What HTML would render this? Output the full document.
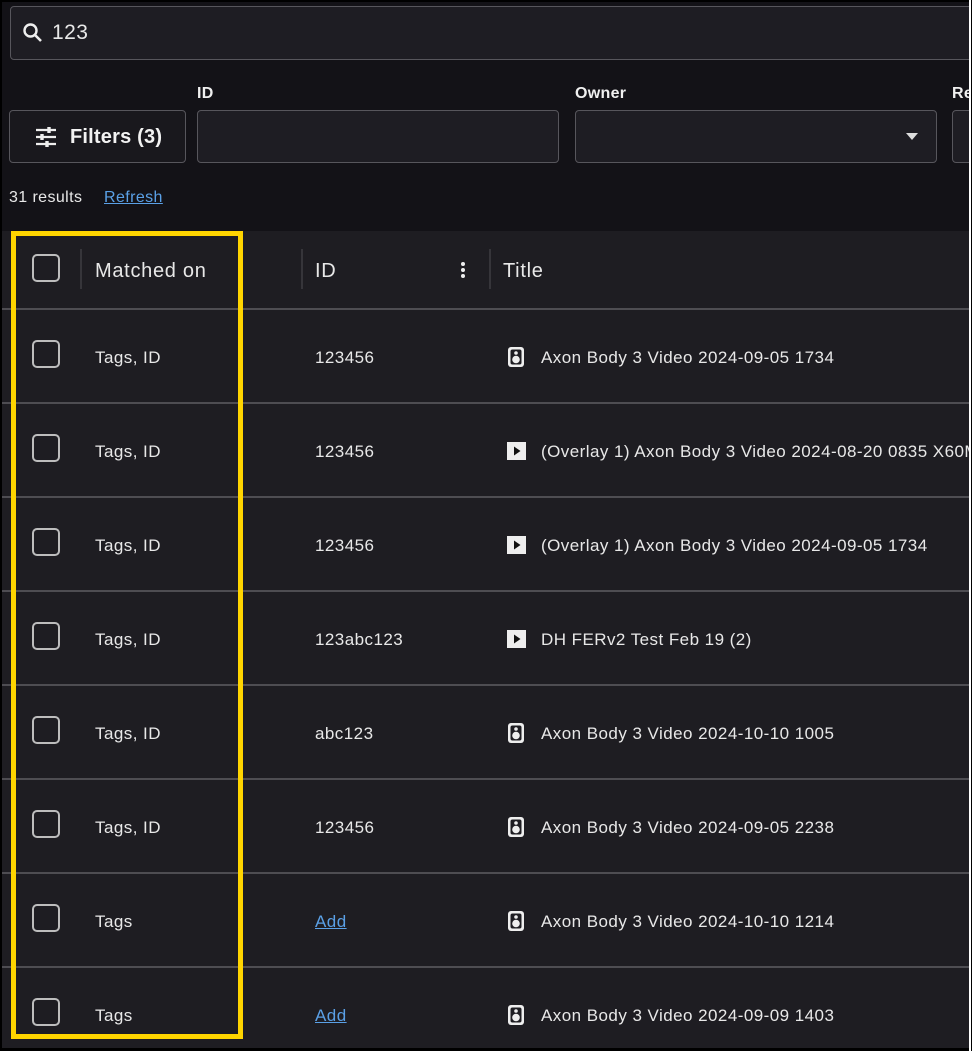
<!DOCTYPE html>
<html><head><meta charset="utf-8"><style>
*{box-sizing:border-box;margin:0;padding:0}
body{width:972px;height:1051px;background:#000;overflow:hidden;font-family:"Liberation Sans",sans-serif;color:#ececec;position:relative}
#pg{position:absolute;left:2px;top:2px;width:967px;height:1046px;background:#131217;overflow:hidden}
.a{position:absolute}
.box{position:absolute;border:1px solid #57565c;border-radius:4px;background:#1e1d23}
.lbl{position:absolute;font-size:16px;font-weight:bold;color:#f0f0f0;letter-spacing:0.3px}
#tbl{position:absolute;left:0;top:229px;width:967px;height:820px;background:#1e1d22}
.row{position:absolute;left:0;width:967px;height:94px;border-top:2px solid #4e4d52}
.cb{position:absolute;left:30px;width:28px;height:28px;border:2px solid #bdbdbd;border-radius:5px}
.row .cb{top:30px}
.t{position:absolute;font-size:17px;color:#e8e8e8;white-space:nowrap;letter-spacing:0.45px}
.row .t{top:38px}
.h{font-size:20px;letter-spacing:0.7px}
.lk{color:#5aa0e6;text-decoration:underline}
.ico{position:absolute;left:504px;top:36px}
</style></head><body>
<div id="pg">
<div class="box" style="left:8px;top:4px;width:980px;height:54px"></div>
<svg class="a" style="left:20px;top:20px" width="22" height="22" viewBox="0 0 22 22"><circle cx="8.5" cy="8.5" r="6" fill="none" stroke="#eee" stroke-width="2.4"/><path d="M13 13l6 6" stroke="#eee" stroke-width="2.6"/></svg>
<div class="t" style="left:50px;top:19px;font-size:21px">123</div>
<div class="lbl" style="left:195px;top:83px">ID</div>
<div class="lbl" style="left:573px;top:83px">Owner</div>
<div class="lbl" style="left:950px;top:83px">Re</div>
<div class="box" style="left:7px;top:108px;width:177px;height:53px;background:#19181d"></div>
<svg class="a" style="left:33px;top:125px" width="22" height="20" viewBox="0 0 22 20"><g stroke="#eee" stroke-width="2.2"><path d="M1 3h20M1 10h20M1 17h20"/></g><g stroke="#eee" stroke-width="3.4"><path d="M14 0v6M7 7v6M12 14v6"/></g></svg>
<div class="t" style="left:68px;top:124px;font-size:20px;font-weight:bold;color:#f2f2f2;letter-spacing:0.2px">Filters (3)</div>
<div class="box" style="left:195px;top:108px;width:362px;height:53px"></div>
<div class="box" style="left:573px;top:108px;width:362px;height:53px"></div>
<svg class="a" style="left:904px;top:131px" width="12" height="7"><path d="M0 0h12L6 7z" fill="#ddd"/></svg>
<div class="box" style="left:950px;top:108px;width:60px;height:53px"></div>
<div class="t" style="left:7px;top:187px;font-size:16px;letter-spacing:0.4px">31 results</div>
<div class="t lk" style="left:102px;top:187px;font-size:16px;letter-spacing:0.4px">Refresh</div>
<div id="tbl">
 <div class="cb" style="top:23px"></div>
 <div class="a" style="left:78px;top:18px;width:2px;height:40px;background:#36353a"></div>
 <div class="t h" style="left:93px;top:29px">Matched on</div>
 <div class="a" style="left:299px;top:18px;width:2px;height:40px;background:#36353a"></div>
 <div class="t h" style="left:313px;top:29px">ID</div>
 <svg class="a" style="left:458px;top:30px" width="6" height="18"><circle cx="3" cy="3" r="2" fill="#eee"/><circle cx="3" cy="9" r="2" fill="#eee"/><circle cx="3" cy="15" r="2" fill="#eee"/></svg>
 <div class="a" style="left:487px;top:18px;width:2px;height:40px;background:#36353a"></div>
 <div class="t h" style="left:501px;top:29px">Title</div>

 <div class="row" style="top:77px"><div class="cb"></div><div class="t" style="left:93px">Tags, ID</div><div class="t" style="left:313px">123456</div>
  <svg class="ico" width="20" height="22"><rect x="2" y="1" width="16" height="20" rx="3" fill="#eee"/><rect x="4.5" y="3.5" width="11" height="15" rx="2" fill="#1e1d22"/><circle cx="10" cy="7" r="1.8" fill="#eee"/><circle cx="10" cy="13.5" r="3.8" fill="#eee"/></svg>
  <div class="t" style="left:539px">Axon Body 3 Video 2024-09-05 1734</div></div>

 <div class="row" style="top:171px"><div class="cb"></div><div class="t" style="left:93px">Tags, ID</div><div class="t" style="left:313px">123456</div>
  <svg class="ico" width="20" height="22"><rect x="1" y="2" width="19" height="18" fill="#eee"/><path d="M8 6.5v9l6.5-4.5z" fill="#111"/></svg>
  <div class="t" style="left:539px">(Overlay 1) Axon Body 3 Video 2024-08-20 0835 X60M</div></div>

 <div class="row" style="top:265px"><div class="cb"></div><div class="t" style="left:93px">Tags, ID</div><div class="t" style="left:313px">123456</div>
  <svg class="ico" width="20" height="22"><rect x="1" y="2" width="19" height="18" fill="#eee"/><path d="M8 6.5v9l6.5-4.5z" fill="#111"/></svg>
  <div class="t" style="left:539px">(Overlay 1) Axon Body 3 Video 2024-09-05 1734</div></div>

 <div class="row" style="top:359px"><div class="cb"></div><div class="t" style="left:93px">Tags, ID</div><div class="t" style="left:313px">123abc123</div>
  <svg class="ico" width="20" height="22"><rect x="1" y="2" width="19" height="18" fill="#eee"/><path d="M8 6.5v9l6.5-4.5z" fill="#111"/></svg>
  <div class="t" style="left:539px">DH FERv2 Test Feb 19 (2)</div></div>

 <div class="row" style="top:453px"><div class="cb"></div><div class="t" style="left:93px">Tags, ID</div><div class="t" style="left:313px">abc123</div>
  <svg class="ico" width="20" height="22"><rect x="2" y="1" width="16" height="20" rx="3" fill="#eee"/><rect x="4.5" y="3.5" width="11" height="15" rx="2" fill="#1e1d22"/><circle cx="10" cy="7" r="1.8" fill="#eee"/><circle cx="10" cy="13.5" r="3.8" fill="#eee"/></svg>
  <div class="t" style="left:539px">Axon Body 3 Video 2024-10-10 1005</div></div>

 <div class="row" style="top:547px"><div class="cb"></div><div class="t" style="left:93px">Tags, ID</div><div class="t" style="left:313px">123456</div>
  <svg class="ico" width="20" height="22"><rect x="2" y="1" width="16" height="20" rx="3" fill="#eee"/><rect x="4.5" y="3.5" width="11" height="15" rx="2" fill="#1e1d22"/><circle cx="10" cy="7" r="1.8" fill="#eee"/><circle cx="10" cy="13.5" r="3.8" fill="#eee"/></svg>
  <div class="t" style="left:539px">Axon Body 3 Video 2024-09-05 2238</div></div>

 <div class="row" style="top:641px"><div class="cb"></div><div class="t" style="left:93px">Tags</div><div class="t lk" style="left:313px">Add</div>
  <svg class="ico" width="20" height="22"><rect x="2" y="1" width="16" height="20" rx="3" fill="#eee"/><rect x="4.5" y="3.5" width="11" height="15" rx="2" fill="#1e1d22"/><circle cx="10" cy="7" r="1.8" fill="#eee"/><circle cx="10" cy="13.5" r="3.8" fill="#eee"/></svg>
  <div class="t" style="left:539px">Axon Body 3 Video 2024-10-10 1214</div></div>

 <div class="row" style="top:735px"><div class="cb"></div><div class="t" style="left:93px">Tags</div><div class="t lk" style="left:313px">Add</div>
  <svg class="ico" width="20" height="22"><rect x="2" y="1" width="16" height="20" rx="3" fill="#eee"/><rect x="4.5" y="3.5" width="11" height="15" rx="2" fill="#1e1d22"/><circle cx="10" cy="7" r="1.8" fill="#eee"/><circle cx="10" cy="13.5" r="3.8" fill="#eee"/></svg>
  <div class="t" style="left:539px">Axon Body 3 Video 2024-09-09 1403</div></div>
</div>
</div>
<div class="a" style="left:969px;top:0;width:2px;height:1051px;background:#fff"></div>
<div class="a" style="left:11px;top:231px;width:232px;height:808px;border:5px solid #ffd500"></div>
</body></html>
